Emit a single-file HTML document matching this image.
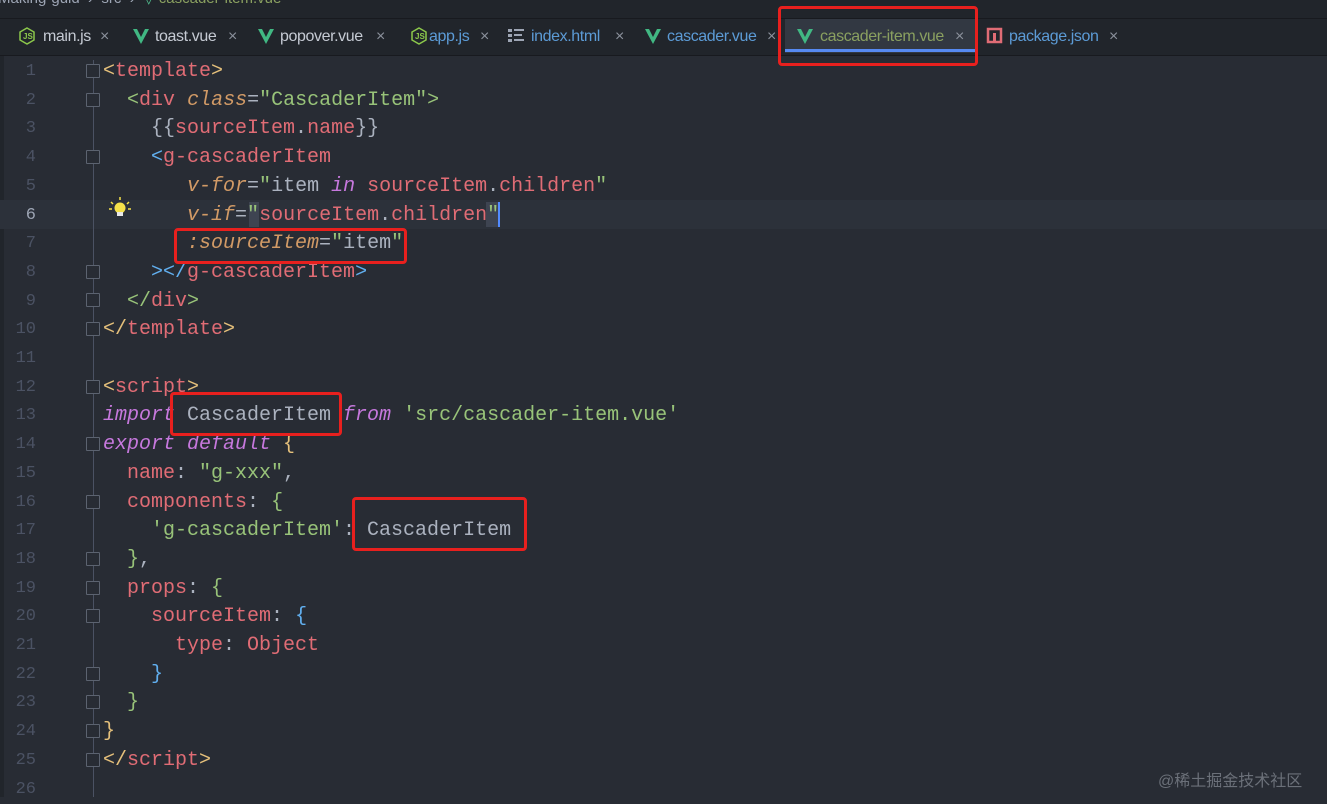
<!DOCTYPE html>
<html><head><meta charset="utf-8"><style>
body{margin:0;width:1327px;height:797px;background:#282c34;overflow:hidden;position:relative;font-family:"Liberation Sans",sans-serif}
.bc{position:absolute;left:0;top:0;width:1327px;height:18px;background:#21252b;color:#9da5b4;font-size:15px;line-height:8px;overflow:hidden}
.tabs{position:absolute;left:0;top:18px;width:1327px;height:36px;background:#21252b;border-top:1px solid #181a1f;border-bottom:1px solid #181a1f}
.t{position:absolute;top:28px;font-size:16px;color:#c5cad3;letter-spacing:-0.4px}
.x{position:absolute;top:28px;font-size:16px;color:#8b919c}
.code{position:absolute;left:0;top:58px;font-family:"Liberation Mono","DejaVu Sans Mono",monospace;font-size:20px;line-height:28.7px;color:#abb2bf;white-space:pre}
.ln{position:absolute;left:0;width:36px;text-align:right;color:#4b5263;font-family:"Liberation Mono",monospace;font-size:17px}
.r{color:#e06c75}.y{color:#e5c07b}.b{color:#61afef}.g{color:#98c379}.o{color:#d19a66;font-style:italic}.p{color:#c678dd;font-style:italic}.w{color:#abb2bf}
.box{position:absolute;border:3px solid #e8201e;border-radius:4px}
.fold{position:absolute;left:86px;width:12px;height:12px;border:1px solid #5c6370;border-radius:1px}
</style></head><body>
<div class="bc"><span style="position:absolute;left:-2px;top:-5px">Making-guid&nbsp; › &nbsp;src &nbsp;› &nbsp;<span style="color:#4fb88a">▽</span> <span style="color:#8aa060">cascader-item.vue</span></span></div>
<div style="position:absolute;left:0;top:18px;width:4px;height:779px;background:#21252b"></div>
<div class="tabs"></div>
<div style="position:absolute;left:785px;top:19px;width:190px;height:34px;background:#323842"></div>
<div style="position:absolute;left:785px;top:49px;width:190px;height:3px;background:#568af2"></div>
<svg style="position:absolute;left:0;top:18px" width="1327" height="36">
<g fill="none" stroke="#8cc84b" stroke-width="1.5"><path d="M27 10l7 4v8l-7 4-7-4v-8z"/><path d="M419 10l7 4v8l-7 4-7-4v-8z"/></g>
<g font-size="8" fill="#8cc84b" font-family="Liberation Sans" font-weight="bold"><text x="23" y="21">JS</text><text x="415" y="21">JS</text></g>
<g fill="#41b883"><path d="M133 11h4l4 8 4-8h4l-8 15z"/><path d="M258 11h4l4 8 4-8h4l-8 15z"/><path d="M645 11h4l4 8 4-8h4l-8 15z"/><path d="M797 11h4l4 8 4-8h4l-8 15z"/></g>
<g fill="#9da5b4"><rect x="508" y="11" width="4" height="3"/><rect x="514" y="11" width="10" height="2"/><rect x="508" y="16" width="4" height="3"/><rect x="514" y="16" width="8" height="2"/><rect x="508" y="21" width="4" height="3"/><rect x="514" y="21" width="10" height="2"/></g>
<rect x="988" y="11" width="13" height="13" fill="none" stroke="#e06c75" stroke-width="2.5"/><rect x="993" y="15" width="3" height="9" fill="#e06c75"/>
</svg>
<span class="t" style="left:43px">main.js</span><span class="x" style="left:100px">×</span>
<span class="t" style="left:155px">toast.vue</span><span class="x" style="left:228px">×</span>
<span class="t" style="left:280px">popover.vue</span><span class="x" style="left:376px">×</span>
<span class="t" style="left:429px;color:#5c9bd6">app.js</span><span class="x" style="left:480px">×</span>
<span class="t" style="left:531px;color:#5c9bd6">index.html</span><span class="x" style="left:615px">×</span>
<span class="t" style="left:667px;color:#5c9bd6">cascader.vue</span><span class="x" style="left:767px">×</span>
<span class="t" style="left:820px;color:#8aa060">cascader-item.vue</span><span class="x" style="left:955px">×</span>
<span class="t" style="left:1009px;color:#5c9bd6">package.json</span><span class="x" style="left:1109px">×</span>
<div style="position:absolute;left:0;top:200px;width:1327px;height:29px;background:#2c313a"></div>
<div style="position:absolute;left:249px;top:202px;width:10px;height:25px;background:#3e4451"></div>
<div style="position:absolute;left:486px;top:202px;width:12px;height:25px;background:#3e4451;border-right:2px solid #528bff"></div>
<div style="position:absolute;left:93px;top:60px;width:1px;height:737px;background:#4b5263"></div>
<div style="position:absolute;left:0;top:58px;line-height:28.7px">
<div class="ln" style="top:0">1</div><div class="ln" style="top:28.7px">2</div><div class="ln" style="top:57.4px">3</div><div class="ln" style="top:86.1px">4</div><div class="ln" style="top:114.8px">5</div><div class="ln" style="top:143.5px;color:#9da5b4">6</div><div class="ln" style="top:172.2px">7</div><div class="ln" style="top:200.9px">8</div><div class="ln" style="top:229.6px">9</div><div class="ln" style="top:258.3px">10</div><div class="ln" style="top:287px">11</div><div class="ln" style="top:315.7px">12</div><div class="ln" style="top:344.4px">13</div><div class="ln" style="top:373.1px">14</div><div class="ln" style="top:401.8px">15</div><div class="ln" style="top:430.5px">16</div><div class="ln" style="top:459.2px">17</div><div class="ln" style="top:487.9px">18</div><div class="ln" style="top:516.6px">19</div><div class="ln" style="top:545.3px">20</div><div class="ln" style="top:574px">21</div><div class="ln" style="top:602.7px">22</div><div class="ln" style="top:631.4px">23</div><div class="ln" style="top:660.1px">24</div><div class="ln" style="top:688.8px">25</div><div class="ln" style="top:717.5px">26</div>
</div>
<div class="fold" style="top:64px;background:#282c34"></div><div class="fold" style="top:93px;background:#282c34"></div><div class="fold" style="top:150px;background:#282c34"></div><div class="fold" style="top:265px;background:#282c34"></div><div class="fold" style="top:293px;background:#282c34"></div><div class="fold" style="top:322px;background:#282c34"></div><div class="fold" style="top:380px;background:#282c34"></div><div class="fold" style="top:437px;background:#282c34"></div><div class="fold" style="top:495px;background:#282c34"></div><div class="fold" style="top:552px;background:#282c34"></div><div class="fold" style="top:581px;background:#282c34"></div><div class="fold" style="top:609px;background:#282c34"></div><div class="fold" style="top:667px;background:#282c34"></div><div class="fold" style="top:695px;background:#282c34"></div><div class="fold" style="top:724px;background:#282c34"></div><div class="fold" style="top:753px;background:#282c34"></div>
<svg style="position:absolute;left:108px;top:196px" width="24" height="24"><g stroke="#f5e14a" stroke-width="1.5"><path d="M12 1v3M3 6l2 2M21 6l-2 2M1 13h3M20 13h3"/></g><circle cx="12" cy="12" r="5.5" fill="#f5e14a"/><rect x="9" y="16" width="6" height="4" fill="#e8e8e8"/></svg>
<div class="code" style="left:103px"><span class="y">&lt;</span><span class="r">template</span><span class="y">&gt;</span>
  <span class="g">&lt;</span><span class="r">div</span> <span class="o">class</span>=<span class="g">"CascaderItem"</span><span class="g">&gt;</span>
    {{<span class="r">sourceItem</span>.<span class="r">name</span>}}
    <span class="b">&lt;</span><span class="r">g-cascaderItem</span>
       <span class="o">v-for</span>=<span class="g">"</span>item <span class="p">in</span> <span class="r">sourceItem</span>.<span class="r">children</span><span class="g">"</span>
       <span class="o">v-if</span>=<span class="g">"</span><span class="r">sourceItem</span>.<span class="r">children</span><span class="g">"</span>
       <span class="o">:sourceItem</span>=<span class="g">"</span>item<span class="g">"</span>
    <span class="b">&gt;&lt;/</span><span class="r">g-cascaderItem</span><span class="b">&gt;</span>
  <span class="g">&lt;/</span><span class="r">div</span><span class="g">&gt;</span>
<span class="y">&lt;/</span><span class="r">template</span><span class="y">&gt;</span>

<span class="y">&lt;</span><span class="r">script</span><span class="y">&gt;</span>
<span class="p">import</span> CascaderItem <span class="p">from</span> <span class="g">'src/cascader-item.vue'</span>
<span class="p">export default</span> <span class="y">{</span>
  <span class="r">name</span>: <span class="g">"g-xxx"</span>,
  <span class="r">components</span>: <span class="g">{</span>
    <span class="g">'g-cascaderItem'</span>: CascaderItem
  <span class="g">}</span>,
  <span class="r">props</span>: <span class="g">{</span>
    <span class="r">sourceItem</span>: <span class="b">{</span>
      <span class="r">type</span>: <span class="r">Object</span>
    <span class="b">}</span>
  <span class="g">}</span>
<span class="y">}</span>
<span class="y">&lt;/</span><span class="r">script</span><span class="y">&gt;</span>
</div>
<div class="box" style="left:778px;top:6px;width:194px;height:54px"></div>
<div class="box" style="left:174px;top:228px;width:227px;height:30px"></div>
<div class="box" style="left:170px;top:392px;width:166px;height:38px"></div>
<div class="box" style="left:352px;top:497px;width:169px;height:48px"></div>
<div style="position:absolute;left:1158px;top:767px;font-family:'Liberation Sans','Noto Sans CJK SC',sans-serif;font-size:16px;color:#6b7079">@稀土掘金技术社区</div>
</body></html>
